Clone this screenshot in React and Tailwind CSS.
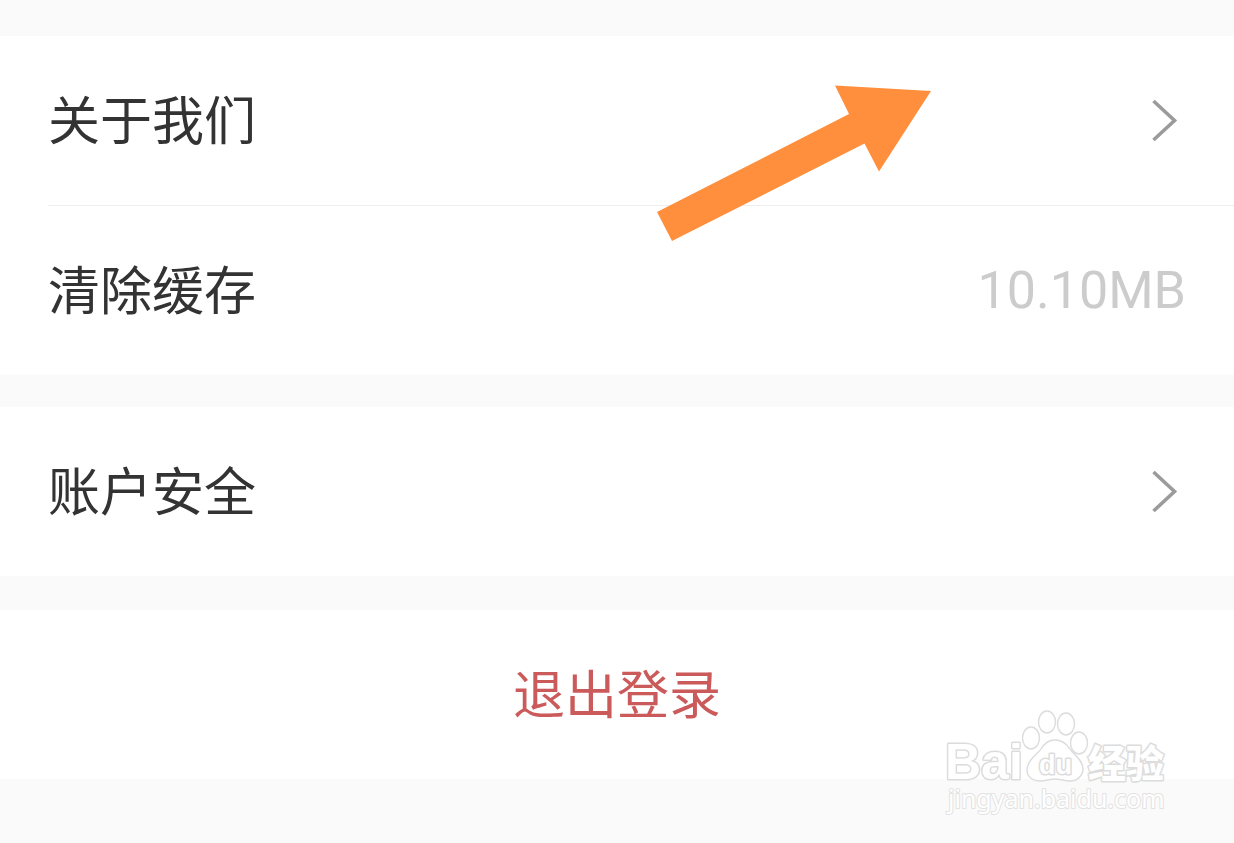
import React from 'react';

const rowClass = 'flex w-full items-center justify-between bg-white px-12 text-left';

function Chevron() {
  return (
    <svg
      className="mr-2 h-11 w-7"
      viewBox="0 0 28 44"
      fill="none"
      stroke="#9b9b9b"
      strokeWidth="3.6"
      aria-hidden="true"
    >
      <path d="M3.500 2 24.500 21.500 3.500 41" />
    </svg>
  );
}

function SettingRow({ label, value }) {
  return (
    <button type="button" className={`${rowClass} h-[169px]`}>
      <span className="pb-1.5">{label}</span>
      {value ? (
        <span className="font-['Roboto',sans-serif] text-[#cccccc]">{value}</span>
      ) : (
        <Chevron />
      )}
    </button>
  );
}

function Arrow() {
  return (
    <svg
      className="pointer-events-none absolute top-[84px] left-[53%] h-[160px] w-[278px]"
      viewBox="654 84 278 160"
      aria-hidden="true"
    >
      <path d="M657 212 849 114 835 85.500 931 91 879 171.500 864.500 143.500 672 241Z" fill="#ff8f3c" />
    </svg>
  );
}

function Watermark() {
  return (
    <svg
      className="pointer-events-none absolute right-[54px] bottom-[13px] h-[130px] w-[250px]"
      viewBox="0 0 250 130"
      fill="#ffffff"
      stroke="#dcdcdc"
      strokeWidth="1.4"
      strokeLinejoin="round"
    >
      <g fontFamily="'Liberation Sans', Arial, sans-serif" fontWeight="bold">
        <text x="15" y="79" fontSize="50" paintOrder="stroke" strokeWidth="3">
          Bai
        </text>
        <ellipse cx="117" cy="22" rx="8.500" ry="11" />
        <ellipse cx="136" cy="24" rx="8.500" ry="11" />
        <ellipse cx="101" cy="38" rx="8.500" ry="11" />
        <ellipse cx="149" cy="43" rx="8.500" ry="11" />
        <path d="M125 40c-7 0-11 4-14 9s-14 11-14 21c0 8 7 11 13 11 5 0 10-2 15-2s10 2 15 2c7 0 13-5 13-12 0-9-9-14-13-20s-8-9-15-9Z" />
        <text x="109" y="74" fontSize="27" paintOrder="stroke" strokeWidth="3">
          du
        </text>
      </g>
      <text
        x="158"
        y="77"
        fontSize="38"
        fontWeight="900"
        fontFamily="'Noto Sans CJK SC', sans-serif"
        strokeWidth="3"
        paintOrder="stroke"
      >
        经验
      </text>
      <text
        x="18"
        y="108"
        fontSize="25"
        fontFamily="'Noto Sans', sans-serif"
        stroke="#e2e2e2"
        strokeWidth="2"
        paintOrder="stroke"
      >
        jingyan.baidu.com
      </text>
    </svg>
  );
}

function App() {
  return (
    <main className="relative min-h-screen bg-[#fafafa] pt-9 font-['Noto_Sans_CJK_SC',sans-serif] text-[52px] leading-none text-[#333333]">
      <section className="bg-white">
        <SettingRow label="关于我们" />
        <div className="ml-12 h-px bg-[#eeeeee]" />
        <SettingRow label="清除缓存" value="10.10MB" />
      </section>

      <section className="mt-8">
        <SettingRow label="账户安全" />
      </section>

      <section className="mt-[34px]">
        <button type="button" className="h-[169px] w-full bg-white pb-1.5 text-[#cb5b5b]">
          退出登录
        </button>
      </section>

      <Arrow />
      <Watermark />
    </main>
  );
}

export default App;
